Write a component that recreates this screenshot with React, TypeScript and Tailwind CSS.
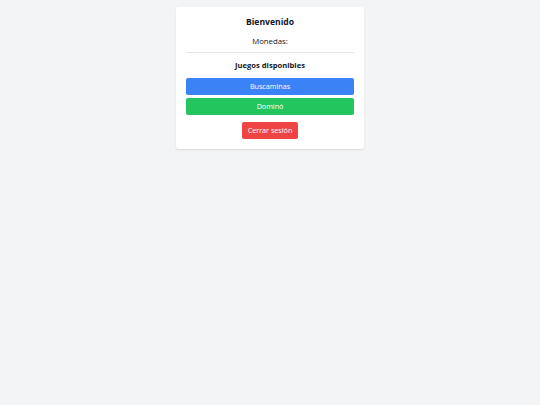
const App = () => {
    return (
        <div className="min-h-screen w-full bg-[#f3f4f6] flex justify-center" style={{ fontFamily: '"Open Sans", sans-serif' }}>
            <div className="mt-[7px] w-[188px] h-[142px] bg-white rounded-[3px] shadow-[0_1px_2px_rgba(0,0,0,0.1)] px-[10px] pt-[8px] flex flex-col items-center self-start">
                <h1 className="text-[8.6px] leading-[14px] font-bold text-[#111827]">Bienvenido</h1>
                <p className="text-[7.8px] leading-[12px] mt-[6px] text-[#111827]">Monedas:</p>
                <hr className="w-full border-t border-[#e5e7eb] mt-[5px]" />
                <h2 className="text-[7.6px] leading-[13px] font-bold mt-[6px] text-[#111827]">Juegos disponibles</h2>
                <button className="w-full h-[17px] mt-[6px] bg-[#3b82f6] text-white text-[7.2px] rounded-[2px]">Buscaminas</button>
                <button className="w-full h-[17px] mt-[3px] bg-[#22c55e] text-white text-[7.2px] rounded-[2px]">Dominó</button>
                <button className="w-[56px] h-[17px] mt-[7px] bg-[#ef4444] text-white text-[7.2px] rounded-[2px]">Cerrar sesión</button>
            </div>
        </div>
    )
}

export default App
